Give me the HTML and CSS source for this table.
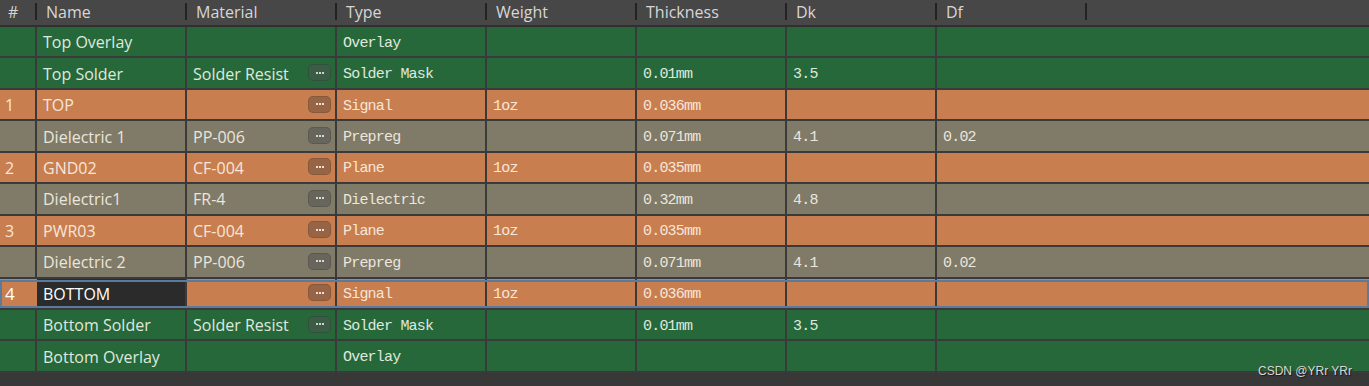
FILE: index.html
```html
<!DOCTYPE html>
<html>
<head>
<meta charset="utf-8">
<link rel="stylesheet" href="styles.css">
</head>
<body>
<div class="stack">
  <div class="head">
    <div class="hc num">#</div>
    <div class="hc">Name</div>
    <div class="hc">Material</div>
    <div class="hc">Type</div>
    <div class="hc">Weight</div>
    <div class="hc">Thickness</div>
    <div class="hc">Dk</div>
    <div class="hc">Df</div>
    <div class="hc last"></div>
  </div>

  <div class="row green">
    <div class="c num"></div><div class="c">Top Overlay</div><div class="c"></div>
    <div class="c m">Overlay</div><div class="c m"></div><div class="c m"></div><div class="c m"></div><div class="c m last"></div>
  </div>
  <div class="row green">
    <div class="c num"></div><div class="c">Top Solder</div><div class="c mat">Solder Resist<span class="btn"><i></i><i></i><i></i></span></div>
    <div class="c m">Solder Mask</div><div class="c m"></div><div class="c m">0.01mm</div><div class="c m">3.5</div><div class="c m last"></div>
  </div>
  <div class="row orange">
    <div class="c num">1</div><div class="c">TOP</div><div class="c mat"><span class="btn"><i></i><i></i><i></i></span></div>
    <div class="c m">Signal</div><div class="c m">1oz</div><div class="c m">0.036mm</div><div class="c m"></div><div class="c m last"></div>
  </div>
  <div class="row gray">
    <div class="c num"></div><div class="c">Dielectric 1</div><div class="c mat">PP-006<span class="btn"><i></i><i></i><i></i></span></div>
    <div class="c m">Prepreg</div><div class="c m"></div><div class="c m">0.071mm</div><div class="c m">4.1</div><div class="c m last">0.02</div>
  </div>
  <div class="row orange">
    <div class="c num">2</div><div class="c">GND02</div><div class="c mat">CF-004<span class="btn"><i></i><i></i><i></i></span></div>
    <div class="c m">Plane</div><div class="c m">1oz</div><div class="c m">0.035mm</div><div class="c m"></div><div class="c m last"></div>
  </div>
  <div class="row gray">
    <div class="c num"></div><div class="c">Dielectric1</div><div class="c mat">FR-4<span class="btn"><i></i><i></i><i></i></span></div>
    <div class="c m">Dielectric</div><div class="c m"></div><div class="c m">0.32mm</div><div class="c m">4.8</div><div class="c m last"></div>
  </div>
  <div class="row orange">
    <div class="c num">3</div><div class="c">PWR03</div><div class="c mat">CF-004<span class="btn"><i></i><i></i><i></i></span></div>
    <div class="c m">Plane</div><div class="c m">1oz</div><div class="c m">0.035mm</div><div class="c m"></div><div class="c m last"></div>
  </div>
  <div class="row gray">
    <div class="c num"></div><div class="c">Dielectric 2</div><div class="c mat">PP-006<span class="btn"><i></i><i></i><i></i></span></div>
    <div class="c m">Prepreg</div><div class="c m"></div><div class="c m">0.071mm</div><div class="c m">4.1</div><div class="c m last">0.02</div>
  </div>
  <div class="row orange selected">
    <div class="c num sel-num">4</div><div class="c editing">BOTTOM</div><div class="c mat"><span class="btn"><i></i><i></i><i></i></span></div>
    <div class="c m">Signal</div><div class="c m">1oz</div><div class="c m">0.036mm</div><div class="c m"></div><div class="c m last"></div>
  </div>
  <div class="row green">
    <div class="c num"></div><div class="c">Bottom Solder</div><div class="c mat">Solder Resist<span class="btn"><i></i><i></i><i></i></span></div>
    <div class="c m">Solder Mask</div><div class="c m"></div><div class="c m">0.01mm</div><div class="c m">3.5</div><div class="c m last"></div>
  </div>
  <div class="row green">
    <div class="c num"></div><div class="c">Bottom Overlay</div><div class="c"></div>
    <div class="c m">Overlay</div><div class="c m"></div><div class="c m"></div><div class="c m"></div><div class="c m last"></div>
  </div>
</div>
<div class="watermark">CSDN @YRr YRr</div>
</body>
</html>
```

FILE: styles.css
```css
html, body {
  margin: 0;
  padding: 0;
  background: #383838;
  width: 1369px;
  height: 386px;
  overflow: hidden;
  position: relative;
}
body {
  font-family: "Open Sans", "Noto Sans", sans-serif;
  font-size: 16px;
}
.stack {
  display: flex;
  flex-direction: column;
}
.head, .row {
  display: grid;
  grid-template-columns: 37px repeat(6, 150px) 1fr;
}
.head {
  grid-template-columns: 37px repeat(7, 150px) 1fr;
  height: 27px;
  background: #474747;
  border-bottom: 2px solid #2f2f2f;
  box-sizing: border-box;
}
.hc {
  position: relative;
  color: #d6d6d6;
  padding-left: 9px;
  line-height: 25px;
  white-space: nowrap;
}
.hc.num { padding-left: 8px; }
.hc:not(.last)::after {
  content: "";
  position: absolute;
  right: 0;
  top: 3px;
  height: 17px;
  width: 2px;
  background: #222;
}
.hc.last::after { display: none; }

.row {
  height: 31.45px;
  box-sizing: border-box;
  border-bottom: 2px solid #3a3a3a;
  position: relative;
}
.c {
  border-right: 2px solid #3a3a3a;
  padding-left: 6px;
  padding-top: 1px;
  display: flex;
  align-items: center;
  white-space: nowrap;
  overflow: hidden;
  position: relative;
}
.c.last { border-right: none; }
.c.num { padding-left: 5px; }
.c.m {
  font-family: "Liberation Mono", "DejaVu Sans Mono", monospace;
  font-size: 15px;
  letter-spacing: -0.8px;
  padding-top: 3px;
}
.green { background: #27683a; color: #dfe8df; }
.orange { background: #c87e4f; color: #f7e6da; }
.gray { background: #807a68; color: #ebe6dc; }

.btn {
  position: absolute;
  right: 4px;
  top: 50%;
  margin-top: -9px;
  width: 23px;
  height: 17px;
  box-sizing: border-box;
  border-radius: 5px;
  background: rgba(80, 80, 80, 0.5);
  border: 1px solid rgba(0, 0, 0, 0.12);
  display: flex;
  align-items: center;
  justify-content: center;
  gap: 1px;
}
.btn i {
  display: block;
  width: 2px;
  height: 2px;
  background: rgba(255, 255, 255, 0.75);
}
.orange .btn { background: rgba(90, 70, 60, 0.45); }
.orange .btn i { background: rgba(255, 240, 230, 0.9); }

.selected::after {
  content: "";
  position: absolute;
  left: 0;
  right: 0;
  top: 1px;
  bottom: 0;
  border: 2px solid #5b7a9c;
  pointer-events: none;
}
.editing {
  background: #2b2b2b;
  color: #ffffff;
}
.sel-num {
  border-right-color: #c87e4f;
  color: #ffffff;
  font-size: 17px;
}
.watermark {
  position: absolute;
  right: 17px;
  bottom: 8px;
  font-family: "Liberation Sans", sans-serif;
  font-size: 12px;
  color: #d8d8d8;
  text-shadow: 1px 1px 1px rgba(0, 0, 0, 0.6);
}
```
